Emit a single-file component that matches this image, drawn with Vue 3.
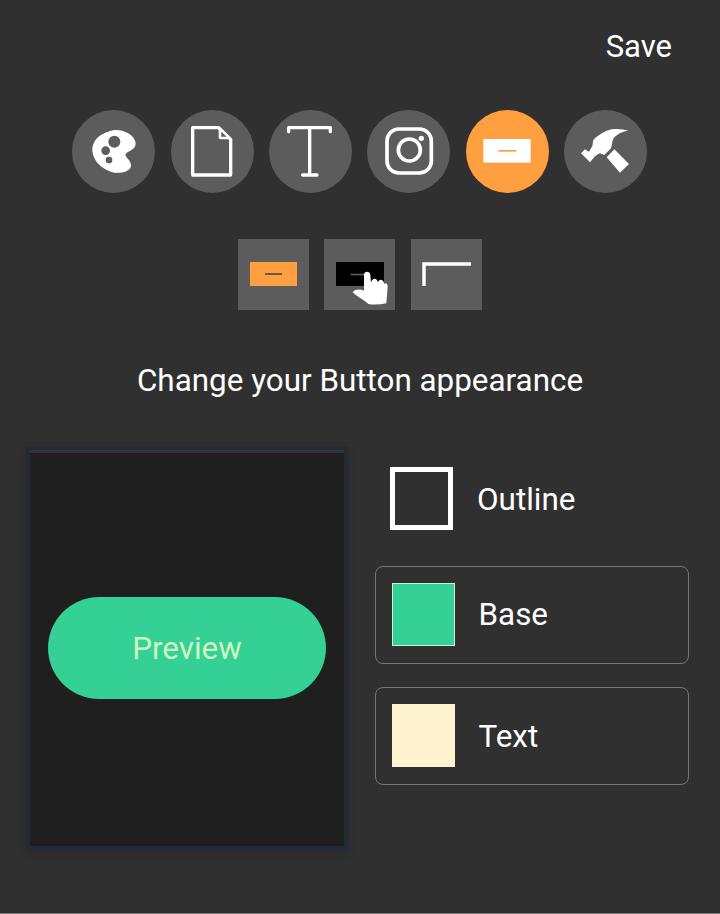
<script setup>
const swatches = [
  { label: 'Base', color: '#35d096', edge: '#c8f2e0' },
  { label: 'Text', color: '#fff2cf', edge: '#fff2cf' }
]
</script>

<template>
  <div class="page">
    <header class="top"><span class="save">Save</span></header>

    <nav class="tabs">
      <div class="tab">
        <svg viewBox="-39 -30 249 249"><path class="fill" fill-rule="evenodd" d="M70 35C100 20 150 40 152 70C153 90 125 95 122 102C118 112 140 120 138 138C135 155 110 160 88 158C50 150 20 120 22 85C24 60 45 42 70 35ZM88 47a18 18 0 1 0 .01 36a18 18 0 1 0-.01-36ZM62 79a13 13 0 1 0 .01 26a13 13 0 1 0-.01-26ZM72 110a10 10 0 1 0 .01 20a10 10 0 1 0-.01-20Z"/></svg>
      </div>
      <div class="tab">
        <svg viewBox="333 30 249 249"><path class="line" stroke-width="10" stroke-linejoin="round" d="M398 83H476L512 118V225H398Z"/><path class="fill" d="M476 83L512 118H482Q476 118 476 112Z"/><path d="M484 95V110H500Z" fill="#5c5c5c"/></svg>
      </div>
      <div class="tab">
        <svg viewBox="628 30 249 249"><path class="line" stroke-width="10" stroke-linecap="round" stroke-linejoin="round" d="M687 95V83H812V95M750 83V225M729 225H772"/></svg>
      </div>
      <div class="tab">
        <svg viewBox="21 30 249 249"><rect class="line" x="81" y="87" width="133" height="132" rx="36" stroke-width="11"/><circle class="line" cx="148" cy="150" r="33" stroke-width="11"/><circle class="fill" cx="184" cy="115" r="8"/></svg>
      </div>
      <div class="tab active">
        <svg viewBox="318 30 249 249"><rect class="fill" x="370" y="117" width="142" height="71"/><rect x="415" y="150" width="54" height="5" fill="#ff9f40"/></svg>
      </div>
      <div class="tab">
        <svg viewBox="-33 -30 249 249"><path class="fill" d="M18 100L30 88L42 95L52 78L55 60C70 45 90 32 110 28C128 25 145 28 160 32C145 33 125 42 116 55C110 65 112 75 108 85L88 105L75 100C68 102 60 108 55 115L45 127ZM118 88L162 132L135 158L95 112Z"/></svg>
      </div>
    </nav>

    <section class="subtabs">
      <div class="subtab">
        <svg viewBox="0 0 71 71"><rect x="12" y="23" width="47" height="24" fill="#ff9f40"/><rect x="27" y="34" width="17" height="2" fill="#6b5a45"/></svg>
      </div>
      <div class="subtab">
        <svg viewBox="-48 -63 213 213"><rect x="-12" y="6" width="144" height="72" fill="#000"/><rect x="32" y="41" width="48" height="5" fill="#5c5c5c"/><path class="fill" d="M72 45C72 32 90 32 91 45L93 68C96 52 112 52 114 68C116 56 130 56 133 72C138 66 143 72 143 80L139 130Q110 136 85 132C70 118 50 110 38 97C42 88 58 85 72 92Z"/></svg>
      </div>
      <div class="subtab">
        <svg viewBox="0 0 71 71"><path class="line" stroke-width="3.5" d="M60 25H13V47"/></svg>
      </div>
    </section>

    <h1 class="title">Change your Button appearance</h1>

    <main class="editor">
      <div class="preview">
        <button class="preview-btn">Preview</button>
      </div>
      <div class="options">
        <div class="outline-row">
          <span class="outline-box"></span>
          <span class="label">Outline</span>
        </div>
        <div v-for="s in swatches" :key="s.label" class="option">
          <span class="swatch" :style="{ background: s.color, borderColor: s.edge }"></span>
          <span class="label">{{ s.label }}</span>
        </div>
      </div>
    </main>

    <div class="edge"></div>
  </div>
</template>

<style>
html, body { margin: 0; background: #303030; }
</style>

<style scoped>
.page {
  height: 914px;
  width: 720px;
  display: flex;
  flex-direction: column;
  background: #303030;
  color: #fff;
  font-family: Roboto, "Liberation Sans", sans-serif;
  overflow: hidden;
}
.top {
  box-sizing: border-box;
  height: 92px;
  display: flex;
  align-items: center;
  justify-content: flex-end;
  padding: 1px 48px 0 0;
}
.save { font-size: 31px; line-height: 1; }
.tabs {
  margin-top: 18px;
  display: flex;
  justify-content: center;
  gap: 15.4px;
  padding-right: 0.8px;
}
.tab {
  width: 83px;
  height: 83px;
  border-radius: 50%;
  background: #5c5c5c;
}
.tab.active { background: #ff9f40; }
.tab svg, .subtab svg { display: block; width: 100%; height: 100%; }
.fill { fill: #fff; }
.line { fill: none; stroke: #fff; }
.subtabs {
  margin-top: 46px;
  display: flex;
  justify-content: center;
  gap: 15.4px;
  padding-right: 0.4px;
}
.subtab {
  width: 71px;
  height: 71px;
  background: #5c5c5c;
}
.title {
  margin: 51px 0 0;
  height: 40px;
  font-size: 31.4px;
  font-weight: 400;
  line-height: 40px;
  text-align: center;
}
.editor {
  margin-top: 46px;
  display: flex;
  padding-left: 26px;
  gap: 27px;
}
.preview {
  box-sizing: border-box;
  width: 322px;
  height: 403px;
  padding: 0 18px;
  display: flex;
  align-items: center;
  background: #1f1f1f;
  border: solid #212b36;
  border-width: 3px 4px 4px;
  box-shadow: inset 0 3px 0 #2f3438, 0 4px 8px rgba(30, 30, 40, 0.35);
}
.preview-btn {
  width: 278px;
  height: 102px;
  border: 0;
  border-radius: 51px;
  background: #35d096;
  color: #cdf5bd;
  font: 400 31.4px Roboto, "Liberation Sans", sans-serif;
  padding: 0;
}
.options {
  width: 314px;
  margin-top: 20px;
  display: flex;
  flex-direction: column;
}
.outline-row {
  display: flex;
  align-items: center;
  gap: 24px;
  padding-left: 15px;
  margin-bottom: 36px;
}
.outline-row .label { padding-top: 3px; }
.outline-box {
  box-sizing: border-box;
  width: 63px;
  height: 63px;
  border: 5px solid #fff;
}
.option {
  box-sizing: border-box;
  height: 97.5px;
  display: flex;
  align-items: center;
  gap: 23.5px;
  padding-left: 16px;
  border: 1.5px solid #757575;
  border-radius: 8px;
  margin-bottom: 23.5px;
}
.option:last-child .label { padding-top: 3px; }
.swatch {
  box-sizing: border-box;
  width: 63px;
  height: 63px;
  border: 1px solid;
}
.label { font-size: 31.4px; line-height: 40px; padding-top: 1px; }
.edge { margin-top: auto; height: 1px; background: #777; }
</style>
